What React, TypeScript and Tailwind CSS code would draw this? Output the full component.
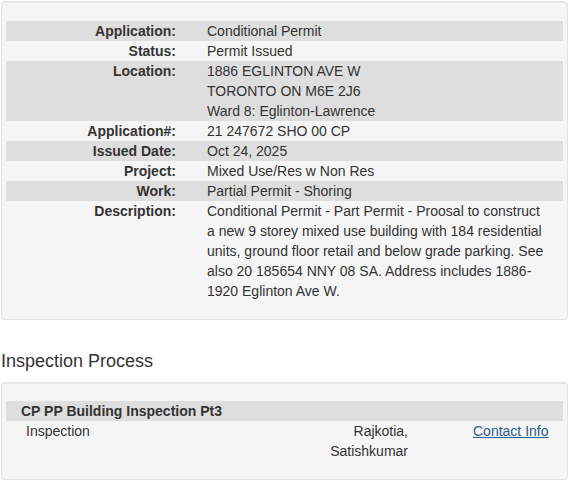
import React from "react";

const rows: { label: string; value: React.ReactNode; shade: boolean }[] = [
  { label: "Application:", value: "Conditional Permit", shade: true },
  { label: "Status:", value: "Permit Issued", shade: false },
  {
    label: "Location:",
    value: (
      <>
        1886 EGLINTON AVE W
        <br />
        TORONTO ON M6E 2J6
        <br />
        Ward 8: Eglinton-Lawrence
      </>
    ),
    shade: true,
  },
  { label: "Application#:", value: "21 247672 SHO 00 CP", shade: false },
  { label: "Issued Date:", value: "Oct 24, 2025", shade: true },
  { label: "Project:", value: "Mixed Use/Res w Non Res", shade: false },
  { label: "Work:", value: "Partial Permit - Shoring", shade: true },
  {
    label: "Description:",
    value:
      "Conditional Permit - Part Permit - Proosal to construct a new 9 storey mixed use building with 184 residential units, ground floor retail and below grade parking. See also 20 185654 NNY 08 SA. Address includes 1886-1920 Eglinton Ave W.",
    shade: false,
  },
];

export default function App() {
  return (
    <div className="w-[570px] h-[482px] overflow-hidden bg-white font-['Liberation_Sans',Arial,sans-serif] text-[14px] leading-[20px] text-[#333]">
      <div className="ml-[1px] mt-[1px] w-[567px] rounded-[4px] border border-[#e3e3e3] bg-[#f5f5f5] px-[4px] pt-[19px] pb-[18px] shadow-[inset_0_1px_1px_rgba(0,0,0,0.05)]">
        {rows.map((r) => (
          <div
            key={r.label}
            className={`grid grid-cols-[170px_1fr] ${r.shade ? "bg-[#dedede]" : ""}`}
          >
            <div className="text-right font-bold">{r.label}</div>
            <div className="pl-[31px] pr-[17px]">{r.value}</div>
          </div>
        ))}
      </div>

      <h3 className="mt-[31px] pl-[1px] text-[18px] leading-[20px] font-normal text-[#333]">
        Inspection Process
      </h3>

      <div className="ml-[1px] mt-[11px] w-[567px] rounded-[4px] border border-[#e3e3e3] bg-[#f5f5f5] px-[4px] pt-[18px] pb-[18px] shadow-[inset_0_1px_1px_rgba(0,0,0,0.05)]">
        <div className="bg-[#dedede] pl-[15px] font-bold">CP PP Building Inspection Pt3</div>
        <div className="flex pl-[20px]">
          <div className="w-[282px]">Inspection</div>
          <div className="w-[100px] text-right">Rajkotia, Satishkumar</div>
          <div className="ml-[65px]">
            <a href="#" className="text-[#2a5d8f] underline">
              Contact Info
            </a>
          </div>
        </div>
      </div>
    </div>
  );
}
